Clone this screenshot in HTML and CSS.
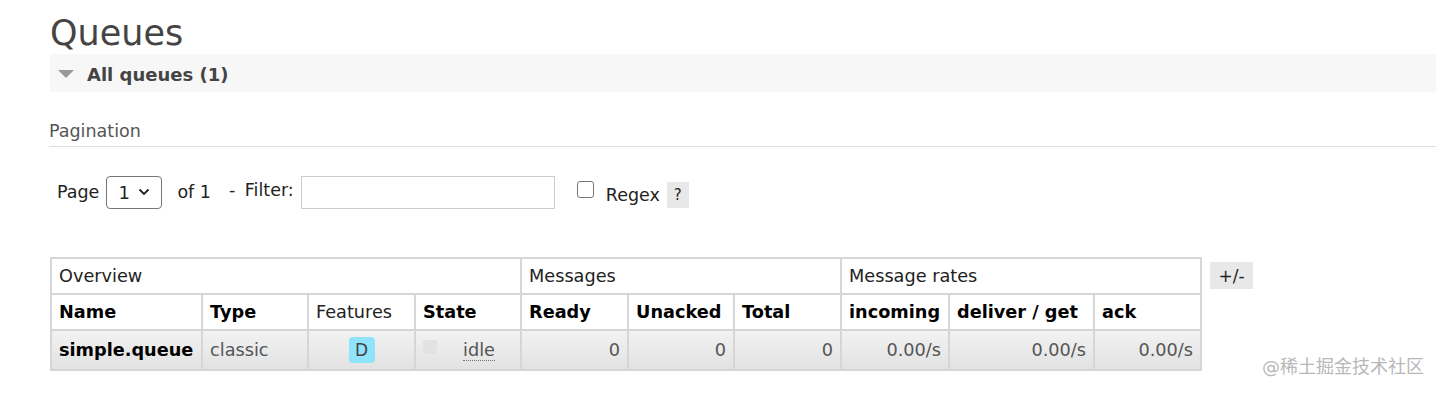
FILE: index.html
```html
<!DOCTYPE html>
<html>
<head>
<meta charset="utf-8">
<link rel="stylesheet" href="styles.css">
</head>
<body>
<div class="page">
  <h1 class="title">Queues</h1>
  <div class="section-bar">
    <span class="tri"></span>
    <span class="section-title">All queues (1)</span>
  </div>
  <div class="pagination-head">Pagination</div>
  <div class="filter-row">
    <span class="lbl">Page</span>
    <div class="select"><span>1</span>
      <svg width="12" height="8" viewBox="0 0 12 8"><path d="M1.5 1.5 L6 6 L10.5 1.5" fill="none" stroke="#222" stroke-width="1.8"/></svg>
    </div>
    <span class="lbl of">of 1</span>
    <span class="lbl filter">- Filter:</span>
    <div class="input"></div>
    <span class="checkbox"></span>
    <span class="lbl regex">Regex</span>
    <span class="help">?</span>
  </div>
  <div class="table-row">
    <table class="list">
      <colgroup>
        <col style="width:151px"><col style="width:106px"><col style="width:107px"><col style="width:106px">
        <col style="width:107px"><col style="width:106px"><col style="width:107px">
        <col style="width:108px"><col style="width:145px"><col style="width:107px">
      </colgroup>
      <thead>
        <tr class="group">
          <th colspan="4">Overview</th>
          <th colspan="3">Messages</th>
          <th colspan="3">Message rates</th>
        </tr>
        <tr class="cols">
          <th>Name</th><th>Type</th><th class="normal">Features</th><th>State</th>
          <th>Ready</th><th>Unacked</th><th>Total</th>
          <th>incoming</th><th>deliver / get</th><th>ack</th>
        </tr>
      </thead>
      <tbody>
        <tr class="data">
          <td class="name">simple.queue</td>
          <td class="type">classic</td>
          <td class="center"><span class="badge">D</span></td>
          <td><div class="state"><span class="sq"></span><span class="idle">idle</span></div></td>
          <td class="num">0</td><td class="num">0</td><td class="num">0</td>
          <td class="num">0.00/s</td><td class="num">0.00/s</td><td class="num">0.00/s</td>
        </tr>
      </tbody>
    </table>
    <span class="plusminus">+/-</span>
    <span class="watermark">@稀土掘金技术社区</span>
  </div>
</div>
</body>
</html>
```
FILE: styles.css
```css
html, body {
  margin: 0;
  padding: 0;
  background: #fff;
}
body {
  font-family: "DejaVu Sans", Verdana, "Noto Sans CJK SC", sans-serif;
  color: #444;
  min-height: 393px;
}
.page {
  padding: 12px 0 30px 50px;
}
.title {
  margin: 0;
  font-size: 35px;
  font-weight: normal;
  line-height: 42px;
  color: #444;
}
.section-bar {
  height: 38px;
  background: #f7f7f7;
  display: flex;
  align-items: center;
  padding-left: 8px;
}
.tri {
  width: 0;
  height: 0;
  border-left: 8px solid transparent;
  border-right: 8px solid transparent;
  border-top: 8px solid #999;
  margin-right: 13px;
  margin-top: 2px;
}
.section-title {
  font-size: 18px;
  font-weight: bold;
  color: #444;
  margin-top: 2px;
}
.pagination-head {
  margin-top: 28px;
  font-size: 17.5px;
  color: #555;
  padding-bottom: 4px;
  border-bottom: 1px solid #ddd;
  line-height: 22px;
  margin-left: -1px;
}
.filter-row {
  display: flex;
  align-items: center;
  margin-top: 28px;
  padding-left: 7px;
  height: 34px;
}
.lbl {
  font-size: 17.5px;
  color: #222;
}
.select {
  margin-left: 7px;
  width: 56px;
  height: 33px;
  border: 1px solid #767676;
  border-radius: 4px;
  display: flex;
  align-items: center;
  justify-content: space-between;
  padding: 0 11px 0 11px;
  box-sizing: border-box;
  font-size: 18px;
  color: #222;
}
.of { margin-left: 15px; }
.filter { margin-left: 18px; margin-top: -4px; word-spacing: 4px; }
.input {
  margin-left: 7px;
  width: 254px;
  height: 33px;
  border: 1px solid #ccc;
  box-sizing: border-box;
}
.checkbox {
  margin-left: 22px;
  margin-top: -5px;
  width: 17px;
  height: 17px;
  border: 1px solid #767676;
  border-radius: 3px;
  box-sizing: border-box;
}
.regex { margin-left: 12px; margin-top: 6px; }
.help {
  margin-left: 7px;
  margin-top: 5px;
  width: 22px;
  height: 26px;
  background: #e8e8e8;
  font-size: 15px;
  color: #222;
  display: flex;
  align-items: center;
  justify-content: center;
}
.table-row {
  margin-top: 48px;
  display: flex;
  align-items: flex-start;
  position: relative;
}
.list {
  border-collapse: collapse;
  table-layout: fixed;
  width: 1150px;
  border: 2px solid #ccc;
  font-size: 17.7px;
}
.list th, .list td {
  border: 2px solid #d6d6d6;
  padding: 0 7px;
  text-align: left;
  white-space: nowrap;
  overflow: hidden;
}
.group th {
  font-weight: normal;
  color: #222;
  height: 34px;
}
.cols th {
  font-weight: bold;
  color: #000;
  height: 34px;
}
.cols th.normal { font-weight: normal; color: #222; }
.data td {
  height: 38px;
  background: linear-gradient(#f2f2f2, #e2e2e2);
  color: #555;
}
.data td.name { font-weight: bold; color: #000; }
.data td.type { color: #555; }
.data td.center { text-align: center; }
.data td.num { text-align: right; color: #555; }
.badge {
  display: inline-block;
  width: 26px;
  height: 26px;
  line-height: 26px;
  text-align: center;
  background: #8fe3fb;
  border-radius: 4px;
  color: #444;
  font-size: 17px;
}
.state {
  display: flex;
  align-items: center;
}
.sq {
  width: 14px;
  height: 14px;
  background: #e2e2e2;
  border-radius: 2px;
  margin-top: -6px;
}
.idle {
  margin-left: 26px;
  border-bottom: 1px dotted #777;
  color: #555;
  line-height: 20px;
}
.plusminus {
  margin-left: 8px;
  margin-top: 5px;
  width: 43px;
  height: 27px;
  background: #e8e8e8;
  font-size: 17px;
  color: #222;
  display: flex;
  align-items: center;
  justify-content: center;
}
.watermark {
  position: absolute;
  left: 1212px;
  top: 98px;
  font-size: 18px;
  line-height: 24px;
  color: #b8b8b8;
  white-space: nowrap;
}
```
